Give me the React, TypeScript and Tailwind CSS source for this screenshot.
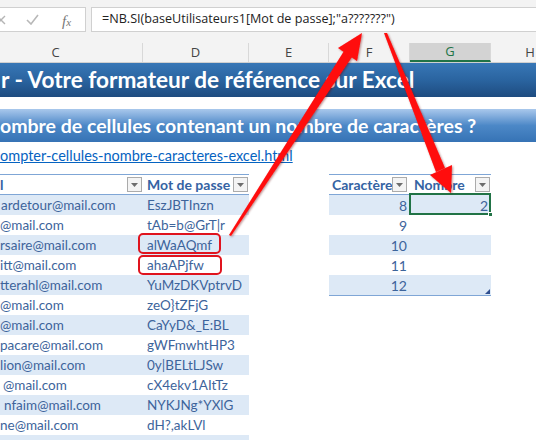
import React from "react";

type Row = { email: string; shift: number; pwd: string };

const rows: Row[] = [
  { email: "ardetour@mail.com", shift: 1, pwd: "EszJBTInzn" },
  { email: "@mail.com", shift: 0, pwd: "tAb=b@GrT|r" },
  { email: "rsaire@mail.com", shift: 0, pwd: "alWaAQmf" },
  { email: "itt@mail.com", shift: 0, pwd: "ahaAPjfw" },
  { email: "tterahl@mail.com", shift: 0, pwd: "YuMzDKVptrvD" },
  { email: "@mail.com", shift: 0, pwd: "zeO}tZFjG" },
  { email: "@mail.com", shift: 0, pwd: "CaYyD&_E:BL" },
  { email: "pacare@mail.com", shift: 0, pwd: "gWFmwhtHP3" },
  { email: "lion@mail.com", shift: 0, pwd: "0y|BELtLJSw" },
  { email: "@mail.com", shift: 3, pwd: "cX4ekv1AItTz" },
  { email: "nfaim@mail.com", shift: 4, pwd: "NYKJNg*YXlG" },
  { email: "ne@mail.com", shift: 0, pwd: "dH?,akLVl" },
  { email: "", shift: 0, pwd: "" },
];

const counts = [
  { c: "8", n: "2" },
  { c: "9", n: "" },
  { c: "10", n: "" },
  { c: "11", n: "" },
  { c: "12", n: "" },
];

function DropBtn() {
  return (
    <span className="flex h-[15px] w-[15px] shrink-0 items-center justify-center border border-[#ababab] bg-[#f4f4f4]">
      <svg width="7" height="4" viewBox="0 0 7 4">
        <path d="M0 0h7L3.5 4z" fill="#6d6d6d" />
      </svg>
    </span>
  );
}

function ColHead({ letter, w, sel }: { letter: string; w: string; sel?: boolean }) {
  return (
    <div
      className={
        "flex h-full shrink-0 items-center justify-center border-r border-[#d8d8d8] text-[13px] " +
        w +
        (sel ? " bg-[#d3d3d3] border-b-2 border-b-[#217346] text-[#217346]" : " text-[#444]")
      }
    >
      {letter}
    </div>
  );
}

export default function App() {
  return (
    <div className="relative h-[440px] w-[536px] overflow-hidden bg-white font-['Lato',sans-serif]">
      {/* ribbon / formula bar */}
      <div className="flex h-[43px] gap-[5px] bg-[#f3f3f3] pt-[7px]">
        <div className="relative flex h-[25px] w-[86px] shrink-0 items-center border border-l-0 border-[#d0d0d0] bg-white">
          <svg className="absolute left-[-4px] top-[7px]" width="10" height="10" viewBox="0 0 10 10">
            <path d="M1 1l8 8M9 1l-8 8" stroke="#b5b5b5" strokeWidth="1.4" />
          </svg>
          <svg className="absolute left-[26px] top-[6px]" width="13" height="11" viewBox="0 0 13 11">
            <path d="M1 6l4 4 7-9" stroke="#b8b8b8" strokeWidth="1.6" fill="none" />
          </svg>
          <span className="absolute left-[62px] top-[2px] font-['Liberation_Serif',serif] text-[15px] italic text-[#777]">
            f<span className="text-[11px]">x</span>
          </span>
        </div>
        <div className="flex h-[25px] flex-1 items-center border border-r-0 border-[#d0d0d0] bg-white pl-[10px] font-['Open_Sans',sans-serif] text-[12.6px] text-[#222]">
          =NB.SI(baseUtilisateurs1[Mot de passe];"a???????")
        </div>
      </div>

      {/* column headers */}
      <div className="flex h-[20px] border-b border-[#d0d0d0] bg-[#f3f3f3] font-['Open_Sans',sans-serif]">
        <div className="ml-[-31px] flex shrink-0">
          <ColHead letter="C" w="w-[174px]" />
        </div>
        <ColHead letter="D" w="w-[106px]" />
        <ColHead letter="E" w="w-[80px]" />
        <ColHead letter="F" w="w-[81px]" />
        <ColHead letter="G" w="w-[81px]" sel />
        <ColHead letter="H" w="w-[79px]" />
      </div>

      {/* title band */}
      <div className="flex h-[34px] items-center whitespace-nowrap bg-gradient-to-b from-[#3877b6] via-[#2a64a0] to-[#1e4c80] pl-[1px] text-[22.6px] font-bold text-white">
        r - Votre formateur de référence sur Excel
      </div>

      {/* subtitle band */}
      <div className="mt-[12px] flex h-[33px] items-center whitespace-nowrap bg-gradient-to-b from-[#a9c8ec] via-[#4c88c7] to-[#3673b5] text-[19.5px] font-bold text-white">
        ombre de cellules contenant un nombre de caractères ?
      </div>

      <div className="flex h-[22px] items-end">
        <span className="text-[14.5px] leading-[16px] text-[#0563c1] underline">
          ompter-cellules-nombre-caracteres-excel.html
        </span>
      </div>

      {/* tables */}
      <div className="mt-[10px] flex items-start text-[13.5px] text-[#3d649b]">
        <div className="w-[249px] shrink-0">
          <div className="flex h-[21px] items-center border-t border-b border-[#7fa6d6] text-[14px] font-bold text-[#3563a3]">
            <div className="flex w-[143px] shrink-0 items-center justify-between pr-[1px]">
              <span>l</span>
              <DropBtn />
            </div>
            <div className="flex flex-1 items-center justify-between pl-[4px] pr-[1px]">
              <span>Mot de passe</span>
              <DropBtn />
            </div>
          </div>
          {rows.map((r, i) => (
            <div key={i} className={"flex h-[20px] items-center " + (i % 2 === 0 ? "bg-[#dde9f6]" : "bg-white")}>
              <div className="w-[143px] shrink-0 whitespace-nowrap">
                <span className="inline-block" style={{ marginLeft: r.shift }}>
                  {r.email}
                </span>
              </div>
              <div className="flex-1 whitespace-nowrap pl-[4px]">{r.pwd}</div>
            </div>
          ))}
        </div>

        <div className="ml-[80px] w-[162px] shrink-0">
          <div className="flex h-[21px] items-center border-t border-b border-[#7fa6d6] text-[14px] font-bold text-[#3563a3]">
            <div className="flex w-[81px] shrink-0 items-center justify-between pl-[3px] pr-[3px]">
              <span>Caractère</span>
              <DropBtn />
            </div>
            <div className="flex w-[81px] shrink-0 items-center justify-between pl-[4px] pr-[1px]">
              <span>Nombre</span>
              <DropBtn />
            </div>
          </div>
          <div className="relative border-b border-[#7fa6d6] text-[14px]">
            {counts.map((r, i) => (
              <div key={i} className={"flex h-[20px] items-center " + (i % 2 === 0 ? "bg-[#dde9f6]" : "bg-white")}>
                <div className="w-[81px] shrink-0 pr-[3px] text-right">{r.c}</div>
                <div className="w-[81px] shrink-0 pr-[3px] text-right">{r.n}</div>
              </div>
            ))}
            {/* selected cell */}
            <div className="absolute left-[80px] top-[-2px] h-[22px] w-[82px] border-2 border-[#217346]" />
            <div className="absolute left-[159px] top-[17px] h-[5px] w-[5px] border border-white bg-[#217346]" />
            {/* resize handle */}
            <svg className="absolute bottom-[1px] right-[1px]" width="5" height="5" viewBox="0 0 5 5">
              <path d="M5 0v5H0z" fill="#2f4f8f" />
            </svg>
          </div>
        </div>
      </div>

      {/* annotations */}
      <svg className="pointer-events-none absolute left-0 top-0" width="536" height="440" viewBox="0 0 536 440">
        <defs>
          <filter id="sh" x="-20%" y="-20%" width="140%" height="140%">
            <feDropShadow dx="1" dy="1" stdDeviation="0.8" floodColor="#600" floodOpacity="0.45" />
          </filter>
        </defs>
        <rect x="139" y="234" width="81" height="19" rx="4" fill="none" stroke="#e0141e" strokeWidth="2" />
        <rect x="139" y="256" width="82" height="18" rx="4" fill="none" stroke="#e0141e" strokeWidth="2" />
        <g fill="#ff0a0a" filter="url(#sh)">
          {/* arrow to formula */}
          <polygon points="229,235 231,236 352,57 344,51" />
          <polygon points="362,33 357,61 338,48" />
          {/* arrow to result */}
          <polygon points="384,33 387,33 445,168 436,172" />
          <polygon points="451,193 430,175 452,165" />
        </g>
      </svg>
    </div>
  );
}
